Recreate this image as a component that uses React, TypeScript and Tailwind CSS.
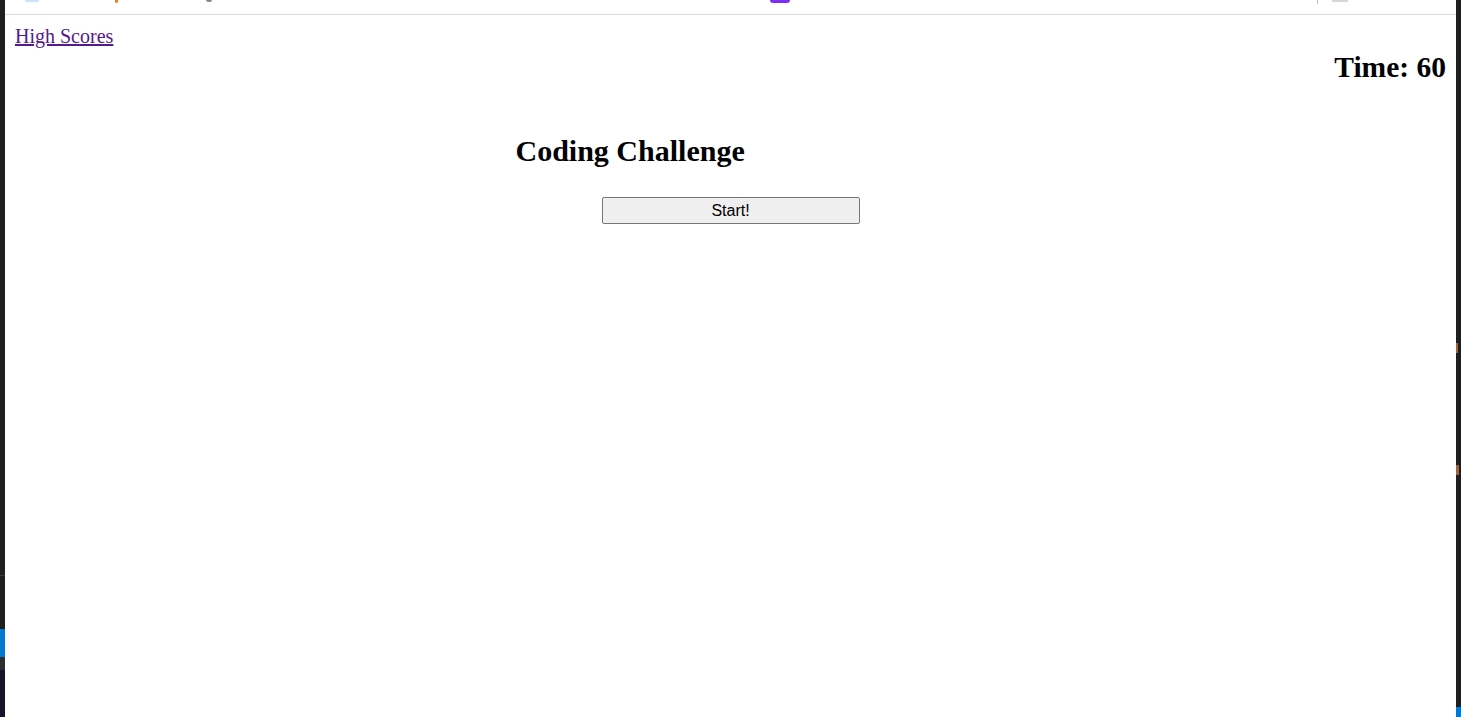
// Coding quiz start screen, shown inside a cropped browser window
const serif = { fontFamily: '"Liberation Serif", "Times New Roman", serif' };

const LeftEdge = () => (
  <aside className="flex w-[5px] shrink-0 flex-col bg-[#1f1f1f]">
    <div className="h-[575px]" />
    <div className="h-px bg-[#3a3a3a]" />
    <div className="h-[53px]" />
    <div className="h-[28px] bg-[#0078d4]" />
    <div className="h-[13px] bg-[#2d2d2d]" />
    <div className="flex-1 bg-[#14142a]" />
  </aside>
);

const RightEdge = () => (
  <aside className="flex w-[5px] shrink-0 flex-col bg-[#1e1e1e]">
    <div className="h-[343px]" />
    <div className="h-[10px] w-[2px] bg-[#a0633f]" />
    <div className="h-[112px]" />
    <div className="h-[10px] w-[3px] bg-[#a0633f]" />
    <div className="flex-1" />
    <div className="h-[10px] bg-[#0078d4]" />
  </aside>
);

const Toolbar = () => (
  <div className="flex h-[15px] items-start border-b border-[#dadce0] bg-white">
    <div className="ml-[20px] h-[2px] w-[14px] rounded-b bg-[#cfe0f7]" />
    <div className="ml-[76px] h-[3px] w-[3px] rounded-b bg-[#f57c1f]" />
    <div className="ml-[88px] h-[2px] w-[6px] rounded-b bg-[#8a8a8a]" />
    <div className="ml-[558px] h-[3px] w-[20px] rounded-b-md bg-[#7b2ff7]" />
    <div className="ml-[527px] h-[4px] w-px bg-[#bdbdbd]" />
    <div className="ml-[14px] h-[2px] w-[16px] bg-[#d6d6d6]" />
  </div>
);

const App = () => {
  return (
    <div className="flex h-[717px] w-full overflow-hidden bg-white">
      <LeftEdge />
      <div className="flex min-w-0 flex-1 flex-col">
        <Toolbar />
        <main className="flex flex-col px-[10px] pt-[10px]" style={serif}>
          <a
            href="#"
            className="self-start text-[20px] leading-[23px] text-[#551a8b] underline"
          >
            High Scores
          </a>
          <h2 className="mt-[2px] text-right text-[29.5px] font-bold leading-[34px] text-black">
            Time: 60
          </h2>
          <section className="mx-auto mt-[50px] flex w-[430px] flex-col">
            <h1 className="text-[30px] font-bold leading-[34px] text-black">
              Coding Challenge
            </h1>
            <button
              className="mx-auto mt-[29px] h-[27px] w-[258px] rounded-[2px] border border-[#767676] bg-[#efefef] text-[16px] text-black"
              style={{ fontFamily: '"Liberation Sans", Arial, sans-serif' }}
            >
              Start!
            </button>
          </section>
        </main>
      </div>
      <RightEdge />
    </div>
  );
};

export default App;
